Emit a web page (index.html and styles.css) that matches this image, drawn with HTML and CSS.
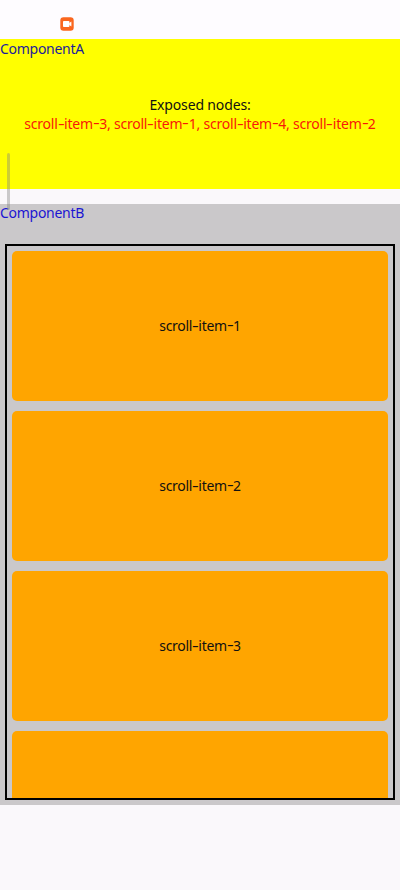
FILE: index.html
```
<!DOCTYPE html>
<html lang="en">
<head>
<meta charset="utf-8">
<title>Exposed nodes</title>
<link rel="stylesheet" href="styles.css">
</head>
<body>
<header class="status">
  <svg class="record" width="14" height="14" viewBox="0 0 14 14"><rect x=".3" y=".3" width="13.4" height="13.4" rx="3.2" fill="#fa661e"/><rect x="3" y="4" width="6.4" height="6" rx=".8" fill="#fff"/><path d="M9.2 6 11.4 4.6V9.4L9.2 8Z" fill="#fff"/></svg>
</header>
<section class="component-a">
  <div class="name name-a">ComponentA</div>
  <div class="exposed">
    <div class="heading">Exposed nodes:</div>
    <div class="nodes">scroll<b>-</b>item<i>-</i>3, scroll<b>-</b>item<i>-</i>1, scroll<b>-</b>item<i>-</i>4, scroll<b>-</b>item<i>-</i>2</div>
  </div>
</section>
<section class="component-b">
  <div class="name name-b">ComponentB</div>
  <div class="scroller">
    <div class="item"><span>scroll<b>-</b>item<i>-</i>1</span></div>
    <div class="item"><span>scroll<b>-</b>item<i>-</i>2</span></div>
    <div class="item"><span>scroll<b>-</b>item<i>-</i>3</span></div>
    <div class="item"></div>
  </div>
</section>
<div class="scrollbar"></div>
</body>
</html>
```
FILE: styles.css
```
* { box-sizing: border-box; }
body {
  position: relative;
  margin: 0;
  height: 890px;
  overflow: hidden;
  background: #faf8fb;
  color: #111;
  font: 14px/19px "Noto Sans", sans-serif;
  white-space: nowrap;
}
b, i {
  display: inline-block;
  margin: 0 1px;
  font-style: normal;
  font-weight: 400;
  transform: scaleX(1.5);
}
i { transform: translateY(-1px) scaleX(1.5); }
.status {
  height: 39px;
  padding: 17px 0 0 60px;
  background: #fefcff;
}
.record { display: block; }
.component-a {
  height: 150px;
  background: #ffff00;
}
.name {
  height: 19px;
  letter-spacing: -.28px;
}
.name-a { color: #1c1c9c; }
.name-b { color: #1b15d2; }
.exposed {
  padding-top: 37px;
  text-align: center;
}
.heading { letter-spacing: -.15px; }
.nodes {
  color: #f81808;
  letter-spacing: -.21px;
}
.component-b {
  height: 601px;
  margin-top: 15px;
  padding: 0 5px;
  background: #cac8ca;
}
.name-b {
  margin-left: -5px;
  line-height: 18px;
}
.scroller {
  display: flex;
  flex-direction: column;
  gap: 10px;
  height: 556px;
  margin-top: 21px;
  padding: 5px;
  border: 2px solid #000;
  overflow: hidden;
}
.item {
  display: flex;
  flex: none;
  align-items: center;
  justify-content: center;
  height: 150px;
  padding-bottom: 2px;
  border-radius: 5px;
  background: #ffa500;
  letter-spacing: -.3px;
}
.scrollbar {
  position: absolute;
  left: 7px;
  top: 153px;
  width: 3px;
  height: 57px;
  border-radius: 2px;
  background: rgba(130, 130, 130, .4);
}
```
